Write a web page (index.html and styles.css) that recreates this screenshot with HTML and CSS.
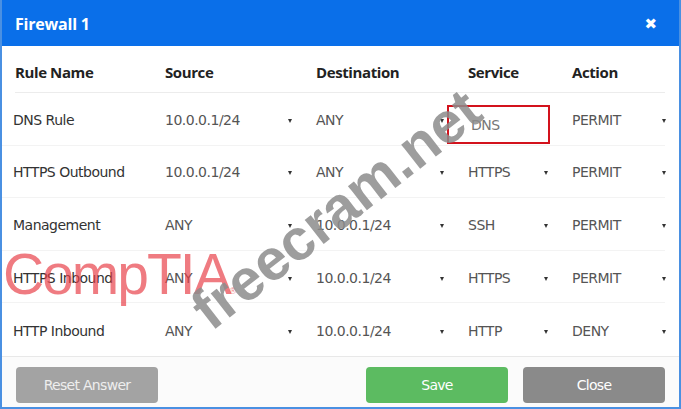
FILE: index.html
```html
<!DOCTYPE html>
<html>
<head>
<meta charset="utf-8">
<link rel="stylesheet" href="styles.css">
</head>
<body>
<div class="dialog">
  <div class="titlebar">
    <span class="title">Firewall 1</span>
    <span class="close-x">&#x2716;</span>
  </div>
  <div class="table">
    <div class="row head">
      <div class="cell">Rule Name</div>
      <div class="cell">Source</div>
      <div class="cell">Destination</div>
      <div class="cell">Service</div>
      <div class="cell">Action</div>
    </div>
    <div class="row">
      <div class="cell name">DNS Rule</div>
      <div class="cell sel">10.0.0.1/24<span class="arr"></span></div>
      <div class="cell sel">ANY<span class="arr"></span></div>
      <div class="cell sel plain"><span class="hl">DNS</span></div>
      <div class="cell sel">PERMIT<span class="arr"></span></div>
    </div>
    <div class="row">
      <div class="cell name">HTTPS Outbound</div>
      <div class="cell sel">10.0.0.1/24<span class="arr"></span></div>
      <div class="cell sel">ANY<span class="arr"></span></div>
      <div class="cell sel">HTTPS<span class="arr"></span></div>
      <div class="cell sel">PERMIT<span class="arr"></span></div>
    </div>
    <div class="row">
      <div class="cell name">Management</div>
      <div class="cell sel">ANY<span class="arr"></span></div>
      <div class="cell sel">10.0.0.1/24<span class="arr"></span></div>
      <div class="cell sel">SSH<span class="arr"></span></div>
      <div class="cell sel">PERMIT<span class="arr"></span></div>
    </div>
    <div class="row">
      <div class="cell name">HTTPS Inbound</div>
      <div class="cell sel">ANY<span class="arr"></span></div>
      <div class="cell sel">10.0.0.1/24<span class="arr"></span></div>
      <div class="cell sel">HTTPS<span class="arr"></span></div>
      <div class="cell sel">PERMIT<span class="arr"></span></div>
    </div>
    <div class="row last">
      <div class="cell name">HTTP Inbound</div>
      <div class="cell sel">ANY<span class="arr"></span></div>
      <div class="cell sel">10.0.0.1/24<span class="arr"></span></div>
      <div class="cell sel">HTTP<span class="arr"></span></div>
      <div class="cell sel">DENY<span class="arr"></span></div>
    </div>
  </div>
  <div class="footer">
    <button class="btn reset">Reset Answer</button>
    <span class="spacer"></span>
    <button class="btn save">Save</button>
    <button class="btn close">Close</button>
  </div>
  <div class="wm-comptia">CompTIA<span class="reg">®</span></div>
  <div class="wm-site">freecram.net</div>
</div>
</body>
</html>
```

FILE: styles.css
```css
* { box-sizing: border-box; }
html, body { margin: 0; padding: 0; }
body {
  width: 681px;
  height: 409px;
  overflow: hidden;
  background: #ffffff;
  font-family: "DejaVu Sans", "Liberation Sans", sans-serif;
}
.dialog {
  position: relative;
  width: 681px;
  height: 409px;
  border: 2px solid #4a90e2;
  border-top: none;
  display: flex;
  flex-direction: column;
  overflow: hidden;
}
.titlebar {
  height: 46px;
  margin: 0 -2px;
  background: #0a6fe9;
  display: flex;
  align-items: center;
  justify-content: space-between;
  padding: 1px 24px 0 15px;
  color: #ffffff;
}
.title {
  font-family: "Open Sans", sans-serif;
  font-weight: 700;
  font-size: 16px;
  letter-spacing: -0.2px;
}
.close-x {
  font-size: 15px;
  font-weight: 700;
}
.table {
  display: flex;
  flex-direction: column;
}
.row {
  display: grid;
  grid-template-columns: 150px 151px 152px 104px 1fr;
  height: 52.6px;
  align-items: center;
  border-bottom: 1px solid #f3f3f3;
  margin: 0 14px 0 0;
}
.row.head {
  height: 47px;
  padding-top: 3px;
  border-bottom: 1px solid #ececec;
  margin-left: 13px;
}
.row.head .cell {
  font-family: "Open Sans", sans-serif;
  font-weight: 700;
  font-size: 15px;
  color: #222;
  letter-spacing: -0.4px;
  padding-left: 0;
}
.row.last { border-bottom: none; }
.cell {
  position: relative;
  font-size: 14px;
  color: #444;
  padding-left: 13px;
  padding-top: 2px;
  height: 100%;
  display: flex;
  align-items: center;
  font-family: "DejaVu Sans", sans-serif;
  letter-spacing: -0.5px;
}
.cell.name { color: #333; padding-left: 11px; }
.cell.sel { color: #555; }
.arr {
  position: absolute;
  right: 11px;
  top: 50%;
  margin-top: 0px;
  width: 0;
  height: 0;
  border-left: 2.5px solid transparent;
  border-right: 2.5px solid transparent;
  border-top: 4px solid #333;
}
.row:not(.head) .cell:last-child .arr { right: -1px; }
.hl {
  position: absolute;
  left: -8px;
  top: 12px;
  width: 103px;
  height: 39px;
  border: 2.5px solid #d3121c;
  padding-left: 22px;
  display: flex;
  align-items: center;
  color: #777;
}
.footer {
  flex: 1;
  border-top: 1px solid #e8e8e8;
  background: #fbfbfb;
  display: flex;
  align-items: flex-start;
  padding: 10px 14px 0 14px;
  gap: 15px;
}
.spacer { flex: 1; }
.btn {
  width: 142px;
  height: 36px;
  border: none;
  border-radius: 4px;
  color: #fff;
  font-family: "DejaVu Sans", sans-serif;
  font-size: 14px;
  letter-spacing: -0.7px;
}
.btn.reset { background: #a3a3a3; color: #eeeeee; }
.btn.save { background: #5cbb61; }
.btn.close { background: #8a8a8a; }
.wm-comptia {
  position: absolute;
  left: 1px;
  top: 246px;
  font-family: "Liberation Sans", sans-serif;
  font-size: 57px;
  font-weight: 400;
  color: rgba(232, 60, 70, 0.68);
  letter-spacing: -2px;
  line-height: 1;
}
.wm-comptia .reg { font-size: 9px; letter-spacing: 0; }
.wm-site {
  position: absolute;
  left: 160px;
  top: 180px;
  font-family: "Liberation Sans", sans-serif;
  font-weight: 700;
  font-size: 58px;
  color: rgba(140, 140, 140, 0.85);
  transform: rotate(-38deg);
  transform-origin: center center;
  line-height: 1;
  white-space: nowrap;
}
```
